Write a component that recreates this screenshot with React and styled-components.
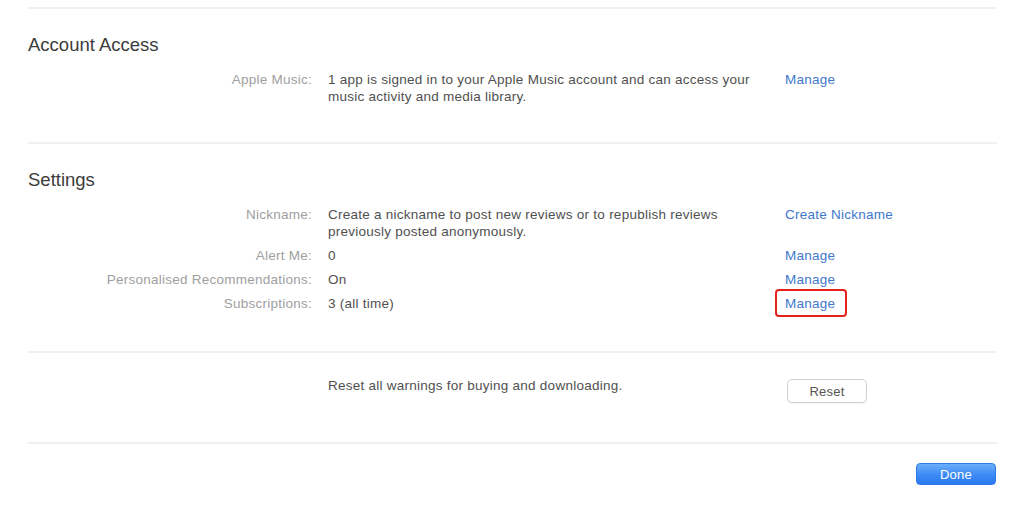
import React from "react";
import styled, { createGlobalStyle } from "styled-components";

const GlobalStyle = createGlobalStyle`
    html, body {
        margin: 0;
        padding: 0;
        background: #ffffff;
    }
    body {
        font-family: "Liberation Sans", Arial, Helvetica, sans-serif;
        -webkit-font-smoothing: antialiased;
    }
`;

const Page = styled.div`
    width: 1024px;
    height: 516px;
    box-sizing: border-box;
    padding: 7px 27px 0 28px;
    background: #fff;
    overflow: hidden;
`;

const Section = styled.section`
    border-top: 2px solid #f1f1f1;
    padding: ${({ $top }) => $top}px 0 ${({ $bottom }) => $bottom}px;
`;

const Heading = styled.h2`
    margin: 0 0 16px;
    font-size: 18.5px;
    line-height: 20px;
    font-weight: normal;
    color: #3c3c3c;
`;

const Rows = styled.div`
    display: grid;
    grid-template-columns: 284px 441px auto;
    column-gap: 16px;
    row-gap: 7px;
    align-items: start;
    font-size: 13.5px;
    line-height: 17px;
    letter-spacing: 0.25px;
`;

const Label = styled.div`
    text-align: right;
    color: #a0a0a0;
    white-space: nowrap;
`;

const Value = styled.div`
    color: #505050;
`;

const LinkCell = styled.div`
    display: flex;
    align-items: flex-start;
`;

const Link = styled.a`
    position: relative;
    color: #3f78cc;
    text-decoration: none;
    cursor: pointer;
    white-space: nowrap;

    ${({ $highlighted }) =>
        $highlighted &&
        `
        &::after {
            content: "";
            position: absolute;
            left: -10px;
            top: -6px;
            width: 68px;
            height: 24px;
            border: 2px solid #e3211d;
            border-radius: 4px;
        }
    `}
`;

const ResetButton = styled.button`
    margin: 2px 0 0 2px;
    width: 80px;
    height: 24px;
    box-sizing: border-box;
    background: #fff;
    border: 1px solid #cfcfcf;
    border-radius: 5px;
    box-shadow: 0 1px 0 rgba(0, 0, 0, 0.04);
    font-family: inherit;
    font-size: 13px;
    letter-spacing: 0.25px;
    color: #555;
    padding: 0;
`;

const Footer = styled.div`
    border-top: 2px solid #f1f1f1;
    display: flex;
    justify-content: flex-end;
    padding: 19px 1px 0 0;
`;

const DoneButton = styled.button`
    width: 80px;
    height: 22px;
    box-sizing: border-box;
    border: 1px solid #2f79e6;
    border-radius: 4px;
    background: linear-gradient(to bottom, #6aaefb, #3c8af5 55%, #2b7bef);
    font-family: inherit;
    font-size: 13px;
    letter-spacing: 0.25px;
    color: #fff;
    padding: 0;
`;

const accountRows = [
    {
        label: "Apple Music:",
        value: "1 app is signed in to your Apple Music account and can access your music activity and media library.",
        link: "Manage",
    },
];

const settingsRows = [
    {
        label: "Nickname:",
        value: "Create a nickname to post new reviews or to republish reviews previously posted anonymously.",
        link: "Create Nickname",
    },
    { label: "Alert Me:", value: "0", link: "Manage" },
    { label: "Personalised Recommendations:", value: "On", link: "Manage" },
    { label: "Subscriptions:", value: "3 (all time)", link: "Manage", highlighted: true },
];

const InfoRows = ({ rows }) => (
    <Rows>
        {rows.map((row) => (
            <React.Fragment key={row.label}>
                <Label>{row.label}</Label>
                <Value>{row.value}</Value>
                <LinkCell>
                    <Link $highlighted={row.highlighted}>{row.link}</Link>
                </LinkCell>
            </React.Fragment>
        ))}
    </Rows>
);

const App = () => {
    return (
        <Page>
            <GlobalStyle />
            <Section $top={26} $bottom={37}>
                <Heading>Account Access</Heading>
                <InfoRows rows={accountRows} />
            </Section>
            <Section $top={26} $bottom={39}>
                <Heading>Settings</Heading>
                <InfoRows rows={settingsRows} />
            </Section>
            <Section $top={24} $bottom={39}>
                <Rows>
                    <Label />
                    <Value>Reset all warnings for buying and downloading.</Value>
                    <LinkCell>
                        <ResetButton>Reset</ResetButton>
                    </LinkCell>
                </Rows>
            </Section>
            <Footer>
                <DoneButton>Done</DoneButton>
            </Footer>
        </Page>
    );
};

export default App;
